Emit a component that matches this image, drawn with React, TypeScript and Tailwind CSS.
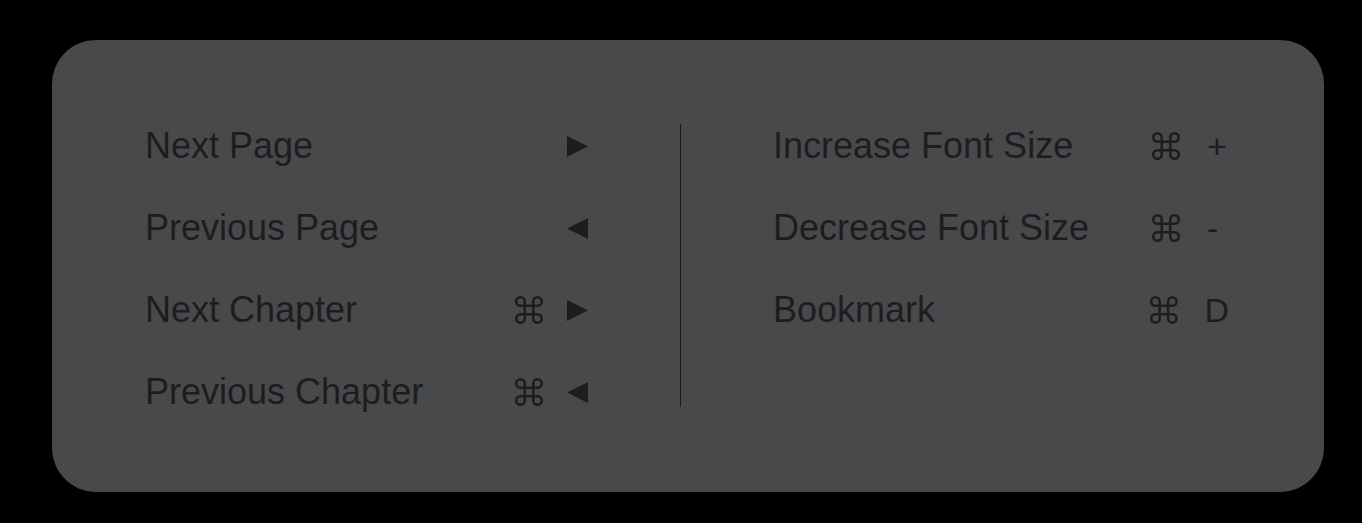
const CmdIcon = () => (
  <svg width="34" height="34" viewBox="0 0 24 24" fill="none" stroke="#1d1d1f" strokeWidth="1.8" strokeLinecap="round" strokeLinejoin="round" className="-m-[3px]">
    <path d="M15 6v12a3 3 0 1 0 3-3H6a3 3 0 1 0 3 3V6a3 3 0 1 0-3 3h12a3 3 0 1 0-3-3" />
  </svg>
);

const Tri = ({ dir }: { dir: "right" | "left" }) => (
  <svg width="21" height="21" viewBox="0 0 20 20" className="-my-px">
    {dir === "right" ? <polygon points="0,0 20,10 0,20" fill="#1d1d1f" /> : <polygon points="20,0 0,10 20,20" fill="#1d1d1f" />}
  </svg>
);

const leftRows: { label: string; cmd: boolean; dir: "right" | "left" }[] = [
  { label: "Next Page", cmd: false, dir: "right" },
  { label: "Previous Page", cmd: false, dir: "left" },
  { label: "Next Chapter", cmd: true, dir: "right" },
  { label: "Previous Chapter", cmd: true, dir: "left" },
];

const rightRows = [
  { label: "Increase Font Size", key: "+" },
  { label: "Decrease Font Size", key: "-" },
  { label: "Bookmark", key: "D" },
];

export default function App() {
  return (
    <div className="w-[1362px] h-[523px] bg-black pt-[40px] pl-[52px]" style={{ fontFamily: '"Liberation Sans", Arial, sans-serif' }}>
      <div className="w-[1272px] h-[452px] bg-[#48494b] rounded-[44px] flex pl-[93px] pt-[65px] text-[#1d1d1f] text-[36px]">
        {/* left column */}
        <div className="w-[443px] flex flex-col">
          {leftRows.map((r) => (
            <div key={r.label} className="h-[82px] leading-[82px] flex items-center justify-between">
              <span>{r.label}</span>
              <div className="flex items-center gap-[24px]">
                {r.cmd && <CmdIcon />}
                <Tri dir={r.dir} />
              </div>
            </div>
          ))}
        </div>

        <div className="w-px h-[283px] bg-[#1a1a1a] mx-[92px] mt-[19px]" />

        {/* right column */}
        <div className="w-[456px] flex flex-col">
          {rightRows.map((r) => (
            <div key={r.label} className="h-[82px] leading-[82px] flex items-center">
              <span className="w-[379px]">{r.label}</span>
              <CmdIcon />
              <span className="ml-[27px] text-[34px]">{r.key}</span>
            </div>
          ))}
        </div>
      </div>
    </div>
  );
}
